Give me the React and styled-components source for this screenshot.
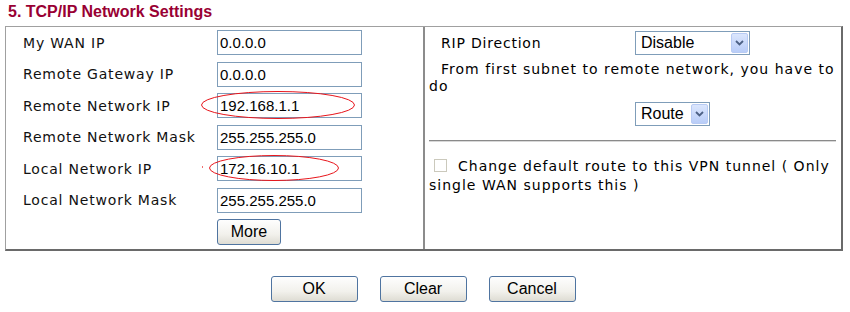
import React from "react";
import styled, { createGlobalStyle } from "styled-components";

const GlobalStyle = createGlobalStyle`
  body {
    margin: 0;
    background: #ffffff;
    font-family: "DejaVu Sans", Verdana, sans-serif;
    color: #000000;
  }
`;

const leftRows = [
  { label: "My WAN IP", value: "0.0.0.0" },
  { label: "Remote Gateway IP", value: "0.0.0.0" },
  { label: "Remote Network IP", value: "192.168.1.1", mark: { left: -16, top: -2, width: 154, height: 28 } },
  { label: "Remote Network Mask", value: "255.255.255.0" },
  { label: "Local Network IP", value: "172.16.10.1", mark: { left: -8, top: -1, width: 130, height: 26 }, dot: true },
  { label: "Local Network Mask", value: "255.255.255.0" },
];

const Page = styled.div`
  width: 850px;
  height: 312px;
  padding: 2px 0 0 0;
  box-sizing: border-box;
`;

const Title = styled.div`
  font-family: "Liberation Sans", Arial, sans-serif;
  font-weight: bold;
  font-size: 16px;
  line-height: 20px;
  color: #990033;
  padding-left: 8px;
  height: 24px;
`;

const Table = styled.div`
  margin-left: 5px;
  width: 838px;
  height: 225px;
  box-sizing: border-box;
  display: grid;
  grid-template-columns: 419px 1fr;
  border-top: 1px solid #a0a0a0;
  border-left: 1px solid #a0a0a0;
  border-right: 2px solid #6a6a6a;
  border-bottom: 2px solid #6a6a6a;
`;

const LeftCell = styled.div`
  border-right: 2px solid #8c8c8c;
  padding: 0 0 0 17px;
  display: grid;
  grid-template-columns: 194px 1fr;
  grid-auto-rows: 31.5px;
  align-items: center;
`;

const Label = styled.div`
  font-size: 14px;
  letter-spacing: 0.8px;
  color: #111;
`;

const Field = styled.div`
  position: relative;
  width: 145px;
  height: 25px;
`;

const TextBox = styled.div`
  width: 100%;
  height: 100%;
  box-sizing: border-box;
  border: 1px solid #7f9db9;
  background: #fff;
  font-family: "Liberation Sans", Arial, sans-serif;
  font-size: 15px;
  line-height: 23px;
  padding-left: 2px;
  color: #000;
`;

const Mark = styled.svg`
  position: absolute;
  overflow: visible;
  pointer-events: none;
`;

const Dot = styled.span`
  position: absolute;
  left: -15px;
  top: 10px;
  width: 1px;
  height: 2px;
  background: #f07070;
`;

const Button = styled.button`
  width: ${(p) => p.$w || 87}px;
  height: 26px;
  box-sizing: border-box;
  border: 1px solid #4f74a0;
  border-radius: 3px;
  background: linear-gradient(#fefefe, #f2f1ec 60%, #dedcd3);
  font-family: "Liberation Sans", Arial, sans-serif;
  font-size: 16px;
  color: #000;
  padding: 0;
`;

const RightCell = styled.div`
  padding: 0 0 0 4px;
  display: flex;
  flex-direction: column;
`;

const SelectRow = styled.div`
  display: grid;
  grid-template-columns: 206px auto;
  align-items: center;
  height: ${(p) => p.$h}px;
`;

const RightLabel = styled.div`
  font-size: 14px;
  letter-spacing: 0.8px;
  padding-left: 12px;
`;

const Note = styled.div`
  font-size: 14px;
  letter-spacing: 1px;
  line-height: 17px;
  text-indent: 12px;
  margin-top: 3px;
`;

const SelectBox = styled.div`
  width: ${(p) => p.$w}px;
  height: 24px;
  box-sizing: border-box;
  border: 1px solid #7f9db9;
  background: #fff;
  display: flex;
  align-items: center;
  justify-content: space-between;
  padding: 1px;
  font-family: "Liberation Sans", Arial, sans-serif;
  font-size: 16px;
`;

const SelectText = styled.span`
  padding-left: 4px;
`;

const Arrow = styled.span`
  width: 17px;
  height: 20px;
  box-sizing: border-box;
  border: 1px solid #b8cbf4;
  border-radius: 2px;
  background: linear-gradient(#dbe6fd, #b9cdf8);
  display: flex;
  align-items: center;
  justify-content: center;
`;

const Rule = styled.div`
  height: 0;
  border-top: 1px solid #8a8a8a;
  border-bottom: 1px solid #d8d8d8;
  margin: 7px 5px 0 0;
`;

const CheckNote = styled.div`
  font-size: 14px;
  letter-spacing: 1px;
  line-height: 19px;
  margin-top: 15px;
  padding-right: 5px;
`;

const Check = styled.span`
  display: inline-block;
  width: 13px;
  height: 13px;
  box-sizing: border-box;
  border: 1px solid #cbc9bc;
  background: #fff;
  margin: 0 11px 0 5px;
  vertical-align: -1px;
`;

const Actions = styled.div`
  display: flex;
  justify-content: center;
  gap: 22px;
  margin-top: 25px;
  padding-right: 4px;
`;

function Select({ value, width }) {
  return (
    <SelectBox $w={width}>
      <SelectText>{value}</SelectText>
      <Arrow>
        <svg width="9" height="6" viewBox="0 0 9 6">
          <path d="M1 1 L4.5 4.5 L8 1" fill="none" stroke="#4d6185" strokeWidth="1.8" />
        </svg>
      </Arrow>
    </SelectBox>
  );
}

function App() {
  return (
    <Page>
      <GlobalStyle />
      <Title>5. TCP/IP Network Settings</Title>
      <Table>
        <LeftCell>
          {leftRows.map((row) => (
            <React.Fragment key={row.label}>
              <Label>{row.label}</Label>
              <Field>
                <TextBox>{row.value}</TextBox>
                {row.mark && (
                  <Mark
                    style={{ left: row.mark.left, top: row.mark.top }}
                    width={row.mark.width}
                    height={row.mark.height}
                  >
                    <ellipse
                      cx={row.mark.width / 2}
                      cy={row.mark.height / 2}
                      rx={row.mark.width / 2 - 0.5}
                      ry={row.mark.height / 2 - 0.5}
                      fill="none"
                      stroke="#e8151b"
                      strokeWidth="1"
                    />
                  </Mark>
                )}
                {row.dot && <Dot />}
              </Field>
            </React.Fragment>
          ))}
          <span />
          <Button $w={64}>More</Button>
        </LeftCell>
        <RightCell>
          <SelectRow $h={31}>
            <RightLabel>RIP Direction</RightLabel>
            <Select value="Disable" width={115} />
          </SelectRow>
          <Note>From first subnet to remote network, you have to do</Note>
          <SelectRow $h={38}>
            <span />
            <Select value="Route" width={75} />
          </SelectRow>
          <Rule />
          <CheckNote>
            <Check />
            Change default route to this VPN tunnel ( Only single WAN supports this )
          </CheckNote>
        </RightCell>
      </Table>
      <Actions>
        <Button>OK</Button>
        <Button>Clear</Button>
        <Button>Cancel</Button>
      </Actions>
    </Page>
  );
}

export default App;
